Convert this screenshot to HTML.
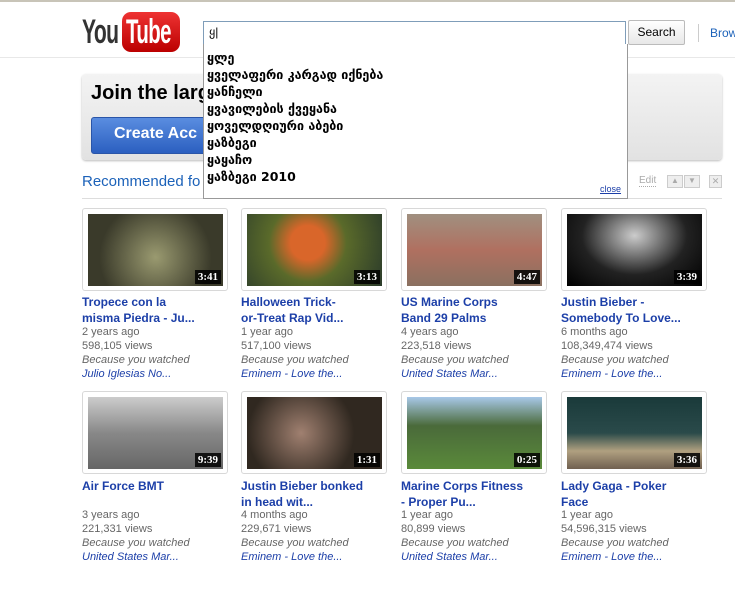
<!DOCTYPE html>
<html><head><meta charset="utf-8"><style>
body{margin:0;width:735px;height:592px;background:#fff;font-family:"Liberation Sans",Arial,sans-serif;position:relative;overflow:hidden}
.a{position:absolute}
.card{position:absolute;width:144px;height:81px;border:1px solid #d8d8d8;border-radius:3px;background:#fff}
.img{position:absolute;left:5px;top:5px;width:135px;height:72px}
.dur{position:absolute;right:2px;bottom:2px;background:rgba(0,0,0,.85);color:#fff;font-weight:bold;font-size:11px;padding:1px 3px;font-family:"Liberation Serif",serif}
.t{position:absolute;width:150px;font-size:12px;font-weight:bold;color:#1c3fa8;line-height:16px}
.m{position:absolute;font-size:11px;color:#666;line-height:14px;width:160px}
.m i{display:block}
.m i.l{color:#1c3fa8}
.ka{font-family:"DejaVu Sans",sans-serif;font-weight:bold;font-size:12.5px;line-height:17px;color:#000}
</style></head><body>
<div class="a" style="left:0;top:0;width:735px;height:2px;background:#c8c4b8"></div>
<div class="a" style="left:82px;top:13px;font-size:34px;font-weight:bold;letter-spacing:-1px;color:#333;transform:scaleX(.62);transform-origin:left">You</div>
<div class="a" style="left:122px;top:12px;width:58px;height:40px;background:linear-gradient(#e33,#b00);border-radius:9px"></div>
<div class="a" style="left:126px;top:13px;font-size:34px;font-weight:bold;letter-spacing:-1px;color:#fff;transform:scaleX(.6);transform-origin:left">Tube</div>
<div class="a" style="left:203px;top:21px;width:421px;height:22px;border:1px solid #7f9db9;background:#fff"></div>
<div class="a" style="left:209px;top:25px;font-size:12px">ყ|</div>
<div class="a" style="left:628px;top:20px;width:55px;height:23px;border:1px solid #bbb;border-radius:2px;background:linear-gradient(#fff,#e8e8e8);font-size:12px;text-align:center;line-height:23px">Search</div>
<div class="a" style="left:698px;top:24px;width:1px;height:18px;background:#ccc"></div>
<div class="a" style="left:710px;top:26px;font-size:12px;color:#1c62b9">Brow</div>
<div class="a" style="left:0;top:57px;width:735px;height:1px;background:#e8e8e8"></div>
<div class="a" style="left:82px;top:74px;width:640px;height:86px;background:linear-gradient(#f3f3f3,#e2e2e2);border-radius:4px;box-shadow:0 1px 2px #bbb"></div>
<div class="a" style="left:91px;top:82px;font-size:20px;font-weight:bold;color:#000">Join the larg</div>
<div class="a" style="left:91px;top:117px;width:130px;height:35px;background:linear-gradient(#5a8de0,#2b5fc0);border-radius:3px;border:1px solid #2a55a8"></div>
<div class="a" style="left:114px;top:125px;font-size:16px;font-weight:bold;color:#fff">Create Acc</div>
<div class="a" style="left:82px;top:173px;font-size:15px;color:#1c62b9">Recommended fo</div>
<div class="a" style="left:82px;top:198px;width:640px;height:1px;background:#ddd"></div>
<div class="a" style="left:639px;top:175px;font-size:10px;color:#aaa;border-bottom:1px dotted #aaa">Edit</div>
<div class="a" style="left:667px;top:175px;width:14px;height:11px;border:1px solid #ccc;background:#eee;font-size:8px;color:#aaa;text-align:center">▲</div>
<div class="a" style="left:684px;top:175px;width:14px;height:11px;border:1px solid #ccc;background:#eee;font-size:8px;color:#aaa;text-align:center">▼</div>
<div class="a" style="left:709px;top:175px;width:11px;height:11px;border:1px solid #ccc;background:#eee;font-size:9px;color:#aaa;text-align:center;line-height:11px">✕</div>
<div class="a" style="left:203px;top:44px;width:423px;height:154px;border:1px solid #999;border-top:none;background:#fff"></div>
<div class="a ka" style="left:207px;top:49px">ყლე<br>ყველაფერი კარგად იქნება<br>ყანჩელი<br>ყვავილების ქვეყანა<br>ყოველდღიური აბები<br>ყაზბეგი<br>ყაყაჩო<br>ყაზბეგი 2010</div>
<div class="a" style="left:600px;top:184px;font-size:9px;color:#1c3fa8;text-decoration:underline">close</div>

<div class="card" style="left:82px;top:208px"><div class="img" style="background:radial-gradient(circle at 50% 60%,#9a9a70,#3a3a2a 70%)"><span class="dur">3:41</span></div></div>
<div class="card" style="left:241px;top:208px"><div class="img" style="background:radial-gradient(circle at 45% 40%,#d9662a 20%,#5a6a2a 45%,#2a3a2a)"><span class="dur">3:13</span></div></div>
<div class="card" style="left:401px;top:208px"><div class="img" style="background:linear-gradient(#a09080,#b07060 50%,#8a7060)"><span class="dur">4:47</span></div></div>
<div class="card" style="left:561px;top:208px"><div class="img" style="background:radial-gradient(ellipse at 50% 30%,#ccc,#222 55%,#000)"><span class="dur">3:39</span></div></div>
<div class="t" style="left:82px;top:294px">Tropece con la<br>misma Piedra - Ju...</div>
<div class="t" style="left:241px;top:294px">Halloween Trick-<br>or-Treat Rap Vid...</div>
<div class="t" style="left:401px;top:294px">US Marine Corps<br>Band 29 Palms</div>
<div class="t" style="left:561px;top:294px">Justin Bieber -<br>Somebody To Love...</div>
<div class="m" style="left:82px;top:325px">2 years ago<br>598,105 views<i>Because you watched</i><i class="l">Julio Iglesias No...</i></div>
<div class="m" style="left:241px;top:325px">1 year ago<br>517,100 views<i>Because you watched</i><i class="l">Eminem - Love the...</i></div>
<div class="m" style="left:401px;top:325px">4 years ago<br>223,518 views<i>Because you watched</i><i class="l">United States Mar...</i></div>
<div class="m" style="left:561px;top:325px">6 months ago<br>108,349,474 views<i>Because you watched</i><i class="l">Eminem - Love the...</i></div>
<div class="card" style="left:82px;top:391px"><div class="img" style="background:linear-gradient(#ccc,#888 50%,#666)"><span class="dur">9:39</span></div></div>
<div class="card" style="left:241px;top:391px"><div class="img" style="background:radial-gradient(circle at 40% 50%,#a08070,#302820 60%)"><span class="dur">1:31</span></div></div>
<div class="card" style="left:401px;top:391px"><div class="img" style="background:linear-gradient(#a8c8e8,#4a6a3a 40%,#5a8a3a)"><span class="dur">0:25</span></div></div>
<div class="card" style="left:561px;top:391px"><div class="img" style="background:linear-gradient(#1a3a3a,#2a4a4a 50%,#b0a080 75%,#706050)"><span class="dur">3:36</span></div></div>
<div class="t" style="left:82px;top:478px">Air Force BMT</div>
<div class="t" style="left:241px;top:478px">Justin Bieber bonked<br>in head wit...</div>
<div class="t" style="left:401px;top:478px">Marine Corps Fitness<br>- Proper Pu...</div>
<div class="t" style="left:561px;top:478px">Lady Gaga - Poker<br>Face</div>
<div class="m" style="left:82px;top:508px">3 years ago<br>221,331 views<i>Because you watched</i><i class="l">United States Mar...</i></div>
<div class="m" style="left:241px;top:508px">4 months ago<br>229,671 views<i>Because you watched</i><i class="l">Eminem - Love the...</i></div>
<div class="m" style="left:401px;top:508px">1 year ago<br>80,899 views<i>Because you watched</i><i class="l">United States Mar...</i></div>
<div class="m" style="left:561px;top:508px">1 year ago<br>54,596,315 views<i>Because you watched</i><i class="l">Eminem - Love the...</i></div>
</body></html>
